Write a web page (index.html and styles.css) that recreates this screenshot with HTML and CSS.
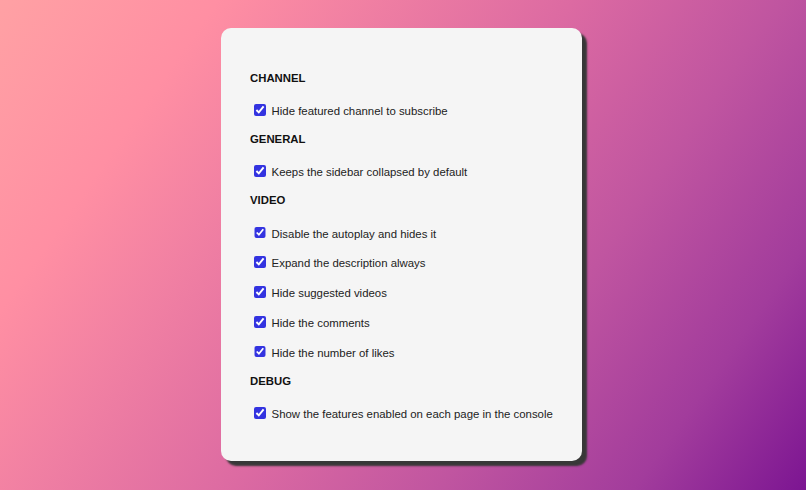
FILE: index.html
```html
<!DOCTYPE html>
<html lang="en">
<head>
<meta charset="utf-8">
<title>Options</title>
<link rel="stylesheet" href="styles.css">
</head>
<body>
<main class="card">
  <section class="group">
    <h2 class="group-title">CHANNEL</h2>
    <label class="option"><input type="checkbox" class="check" checked><span>Hide featured channel to subscribe</span></label>
  </section>
  <section class="group">
    <h2 class="group-title">GENERAL</h2>
    <label class="option"><input type="checkbox" class="check" checked><span>Keeps the sidebar collapsed by default</span></label>
  </section>
  <section class="group">
    <h2 class="group-title">VIDEO</h2>
    <label class="option"><input type="checkbox" class="check" checked><span>Disable the autoplay and hides it</span></label>
    <label class="option"><input type="checkbox" class="check" checked><span>Expand the description always</span></label>
    <label class="option"><input type="checkbox" class="check" checked><span>Hide suggested videos</span></label>
    <label class="option"><input type="checkbox" class="check" checked><span>Hide the comments</span></label>
    <label class="option"><input type="checkbox" class="check" checked><span>Hide the number of likes</span></label>
  </section>
  <section class="group">
    <h2 class="group-title">DEBUG</h2>
    <label class="option"><input type="checkbox" class="check" checked><span>Show the features enabled on each page in the console</span></label>
  </section>
</main>
</body>
</html>
```

FILE: styles.css
```css
html, body {
  margin: 0;
  padding: 0;
  height: 100%;
}

body {
  background: linear-gradient(125deg,
    #ffa1a4 0%,
    #ff8fa3 19%,
    #dc6aa2 50%,
    #c055a0 68%,
    #a23c9c 85%,
    #7c1592 100%);
  font-family: "Liberation Sans", Arial, sans-serif;
  overflow: hidden;
}

.card {
  box-sizing: border-box;
  width: 361px;
  height: 433px;
  margin: 28px 0 0 calc(50% - 182px);
  padding: 44px 29px 0;
  background: #f5f5f5;
  border-radius: 10px;
  box-shadow: 5px 5px 2px #383838;
}

.group + .group {
  margin-top: 14.9px;
}

.group-title {
  margin: 0 0 20.3px;
  font-size: 11.35px;
  line-height: 13px;
  font-weight: bold;
  color: #111;
}

.option {
  display: flex;
  align-items: flex-start;
  font-size: 11.4px;
  line-height: 13px;
  color: #222;
}

.option + .option {
  margin-top: 16.8px;
}

.check {
  width: 11.6px;
  height: 11.6px;
  margin: -1px 6px 0 4px;
  accent-color: #3333e0;
  flex: none;
}
```
